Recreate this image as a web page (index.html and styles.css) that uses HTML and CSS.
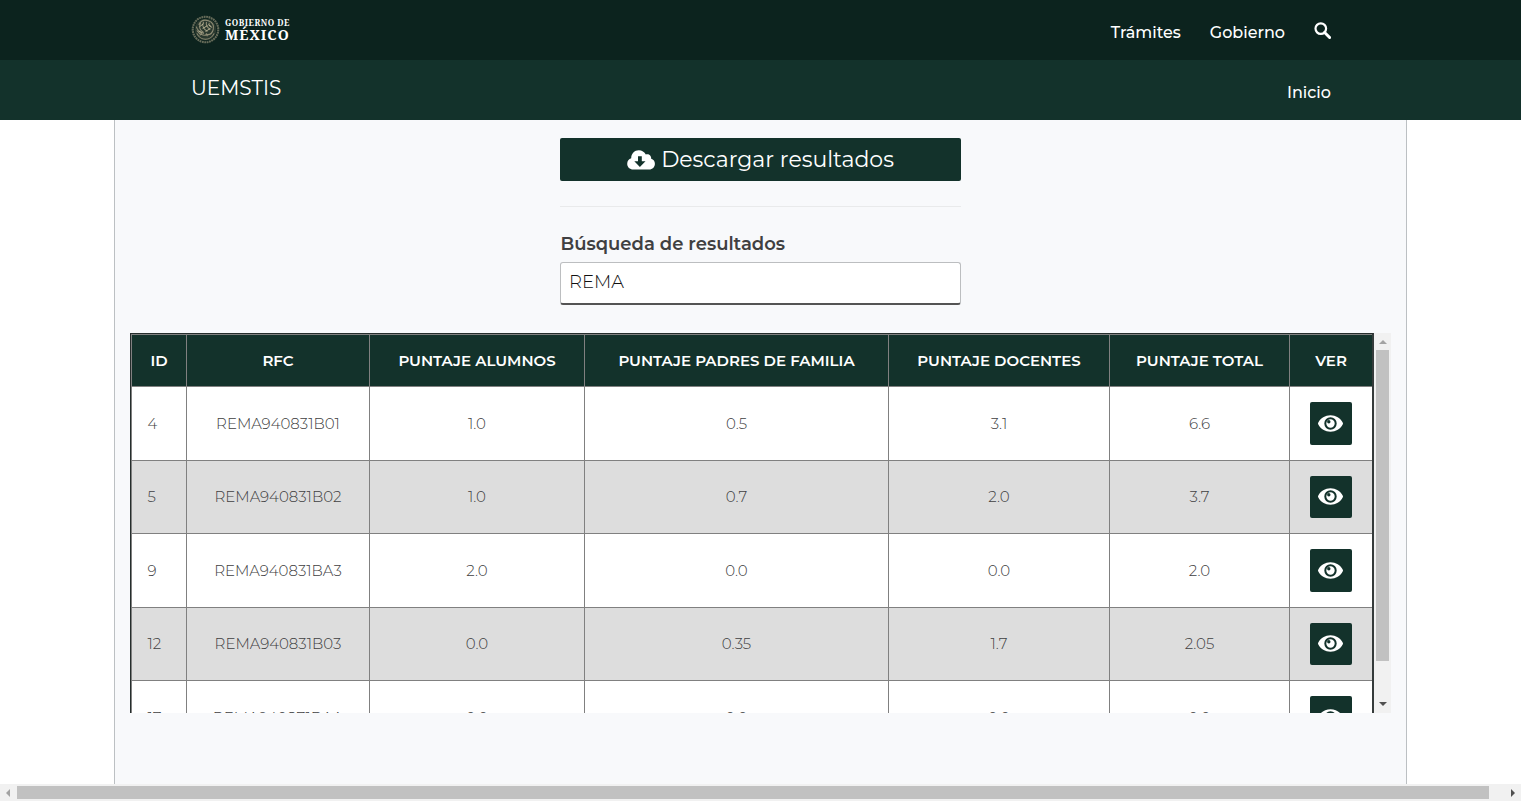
FILE: index.html
```html
<!DOCTYPE html>
<html lang="es">
<head>
<meta charset="utf-8">
<title>UEMSTIS</title>
<link rel="stylesheet" href="styles.css">
</head>
<body>
<svg class="defs" width="0" height="0">
  <symbol id="eye" viewBox="0 0 25 17"><path fill="#fff" d="M.2 7.700C2.600 3 7.200.2 12.500.2s9.900 2.800 12.300 7.500q.4.800 0 1.600C22.400 14 17.800 16.800 12.500 16.800S2.600 14 .2 9.300q-.4-.8 0-1.600z"/><circle cx="12.500" cy="8.500" r="5.200" fill="none" stroke="#13322b" stroke-width="2"/><circle cx="10.800" cy="6.700" r="1.700" fill="#13322b"/></symbol>
</svg>
<header class="gov"><div class="wrap">
  <a class="brand">
    <svg class="seal" viewBox="0 0 30 30" fill="none" stroke="#8e8c74">
      <circle cx="15" cy="15" r="13.200" stroke-width="2.200" stroke-dasharray="1.900 .6" opacity=".7"/>
      <circle cx="15" cy="15" r="11.200" fill="#48503f" stroke="none" opacity=".5"/>
      <path d="M8 10c2-4 6-5.500 10-4s6 5 5 9-4 6-8 5M10 8c-2 4-1 8 3 10M13 7c-2 4 0 8 4 10M16 7c-1 4 1 6 4 8M19 8c-1 2 0 4 3 5M5.500 12c1 4 4 6 8 7M6 16c3 5 9 6 14 4M12 18l-3 3M16 19l1 3M6 19c2 4 6 6 9 6s7-2 9-6" stroke-width="1.100"/>
      <path d="M9 12l4-3M12 14l5-3M15 17l5-3M8 17l3 1M18 10l3 2" stroke="#c4bd9b" stroke-width=".9"/>
    </svg>
    <span class="brand-text"><span class="brand-top">GOBIERNO DE</span><span class="brand-main">MÉXICO</span></span>
  </a>
  <nav class="links"><a class="tram">Trámites</a><a class="gob">Gobierno</a>
    <svg class="search" viewBox="0 0 17 17" fill="none" stroke="#fff"><circle cx="6.800" cy="6.600" r="5.300" stroke-width="2.200"/><path d="M10.600 10.500l5 5" stroke-width="3" stroke-linecap="round"/></svg>
  </nav>
</div></header>
<div class="sub"><div class="wrap"><span class="site">UEMSTIS</span><a class="home">Inicio</a></div></div>
<main class="panel">
  <div class="tools">
    <button class="download"><svg viewBox="0 0 28 20"><path fill="#fff" d="M6.300 19.600C2.800 19.600.2 17.200.2 13.800c0-2.700 1.600-4.800 4-5.500C4.200 3.700 7.500.3 11.800.3c3.100 0 5.700 1.600 7 4.200 2.900-1 5.700 1.100 5.400 4.300 2.300.6 3.700 2.500 3.700 5 0 3.400-2.500 5.800-5.700 5.800z"/><path fill="#13322b" d="M11 6.200h3.800v5h3.700l-5.600 5.700-5.600-5.700H11z"/></svg><span>Descargar resultados</span></button>
    <hr class="rule">
    <label class="label">Búsqueda de resultados</label>
    <div class="field">REMA</div>
  </div>
  <div class="scroller">
    <div class="table">
      <div class="row head"><div>ID</div><div>RFC</div><div>PUNTAJE ALUMNOS</div><div>PUNTAJE PADRES DE FAMILIA</div><div>PUNTAJE DOCENTES</div><div>PUNTAJE TOTAL</div><div>VER</div></div>
      <div class="row"><div>4</div><div>REMA940831B01</div><div>1.0</div><div>0.5</div><div>3.1</div><div>6.6</div><div><button class="view"><svg><use href="#eye"/></svg></button></div></div>
      <div class="row alt"><div>5</div><div>REMA940831B02</div><div>1.0</div><div>0.7</div><div>2.0</div><div>3.7</div><div><button class="view"><svg><use href="#eye"/></svg></button></div></div>
      <div class="row"><div>9</div><div>REMA940831BA3</div><div>2.0</div><div>0.0</div><div>0.0</div><div>2.0</div><div><button class="view"><svg><use href="#eye"/></svg></button></div></div>
      <div class="row alt"><div>12</div><div>REMA940831B03</div><div>0.0</div><div>0.35</div><div>1.7</div><div>2.05</div><div><button class="view"><svg><use href="#eye"/></svg></button></div></div>
      <div class="row"><div>17</div><div>REMA940871BAA</div><div>0.0</div><div>0.0</div><div>0.0</div><div>0.0</div><div><button class="view"><svg><use href="#eye"/></svg></button></div></div>
    </div>
    <div class="vbar"><i class="up"></i><i class="vthumb"></i><i class="down"></i></div>
  </div>
</main>
<div class="hbar"><i class="left"></i><i class="hthumb"></i><i class="right"></i></div>
</body>
</html>
```
FILE: styles.css
```css
* { box-sizing: border-box; }
body { margin: 0; height: 801px; overflow: hidden; background: #fff; color: #404041; font-family: Montserrat, Inter, sans-serif; display: flex; flex-direction: column; }
.defs { display: none; }
.gov, .sub { width: 1521px; height: 60px; flex: none; background: #0c231e; color: #fff; }
.sub { background: #13322b; }
.wrap { width: 1140px; margin-left: 191px; height: 60px; display: flex; justify-content: space-between; }
.brand { display: flex; align-items: flex-start; gap: 5px; padding-top: 15px; }
.seal { width: 29px; height: 29px; }
.brand-text { display: flex; flex-direction: column; padding-top: 3px; font-family: "Noto Serif", "DejaVu Serif", serif; font-weight: 700; white-space: nowrap; }
.brand-top { font-size: 8.200px; line-height: 9px; letter-spacing: .5px; }
.brand-main { font-size: 14px; line-height: 15px; letter-spacing: 1px; }
.links { display: flex; align-items: flex-start; padding-top: 22px; font-size: 16px; line-height: 21px; font-weight: 500; }
.tram, .gob { margin-right: 29px; }
.search { width: 17px; height: 17px; }
.site { font-size: 20px; line-height: 24px; padding-top: 16px; }
.home { font-size: 16px; line-height: 21px; padding-top: 22px; font-weight: 500; }
.panel { width: 1293px; height: 664px; margin-left: 114px; background: #f8f9fb; border: solid #bcc0c3; border-width: 0 1px; padding: 18px 15px 0; }
.tools { width: 401px; margin: 0 auto; }
.download { display: flex; align-items: center; justify-content: center; gap: 6px; width: 401px; height: 43px; padding: 0; border: 0; border-radius: 2px; background: #13322b; color: #fff; font: 400 22px Montserrat, Inter, sans-serif; }
.download svg { width: 28px; height: 20px; }
.download span { margin-top: -1px; }
.rule { height: 1px; border: 0; background: #e9eaeb; margin: 25px 0; }
.label { display: block; font-size: 18px; line-height: 24px; font-weight: 600; padding-left: .5px; }
.field { height: 43px; margin-top: 6px; border: 1px solid #bcbec0; border-bottom: 2px solid #545454; border-radius: 3px; background: #fff; color: #111; padding: 8px; font-size: 18px; line-height: 22px; font-weight: 300; }
.scroller { display: flex; width: 1261px; height: 380px; margin-top: 28px; overflow: hidden; }
.table { width: 1244px; flex: none; height: 480px; border: 1px solid #252d2c; border-right: 2px solid #353b3b; }
.row { display: grid; grid-template: 100% / 55px 183px 215px 304px 221px 180px 82px; height: 74px; background: #fff; border-left: 1px solid #808080; font-size: 15px; font-weight: 300; text-align: center; line-height: 73px; }
.row > div { border-right: 1px solid #808080; border-bottom: 1px solid #808080; white-space: nowrap; }
.row > div:last-child { border-right: 0; }
.row:not(.head) > div:first-child { text-align: left; padding-left: 15.500px; }
.row.alt { background: #ddd; height: 73px; line-height: 72px; }
.row.head { height: 53px; border-top: 1px solid #808080; background: #13322b; color: #fff; font-weight: 600; line-height: 51px; }
.view { display: flex; align-items: center; justify-content: center; width: 42px; height: 43px; margin: 15px auto 0; padding: 0 1px 1px 0; border: 0; border-radius: 2px; background: #13322b; }
.alt .view { height: 42px; }
.view svg { width: 25px; height: 17px; }
.vbar { width: 17px; height: 380px; background: #f1f1f1; display: flex; flex-direction: column; align-items: center; }
.vthumb { width: 13px; height: 311px; background: #c1c1c1; margin-bottom: 41px; }
.up { border: 4px solid transparent; border-top: 0; border-bottom: 4px solid #a3a3a3; margin: 7px 0 6px; }
.down { border: 4px solid transparent; border-bottom: 0; border-top: 4px solid #505050; }
.hbar { width: 1521px; height: 17px; background: #f1f1f1; display: flex; align-items: center; }
.left { border: 4px solid transparent; border-left: 0; border-right: 4px solid #a3a3a3; margin: 0 7px 0 6px; }
.hthumb { width: 1472px; height: 13px; background: #c1c1c1; }
.right { border: 4px solid transparent; border-right: 0; border-left: 4px solid #505050; margin-left: 22px; }
```
